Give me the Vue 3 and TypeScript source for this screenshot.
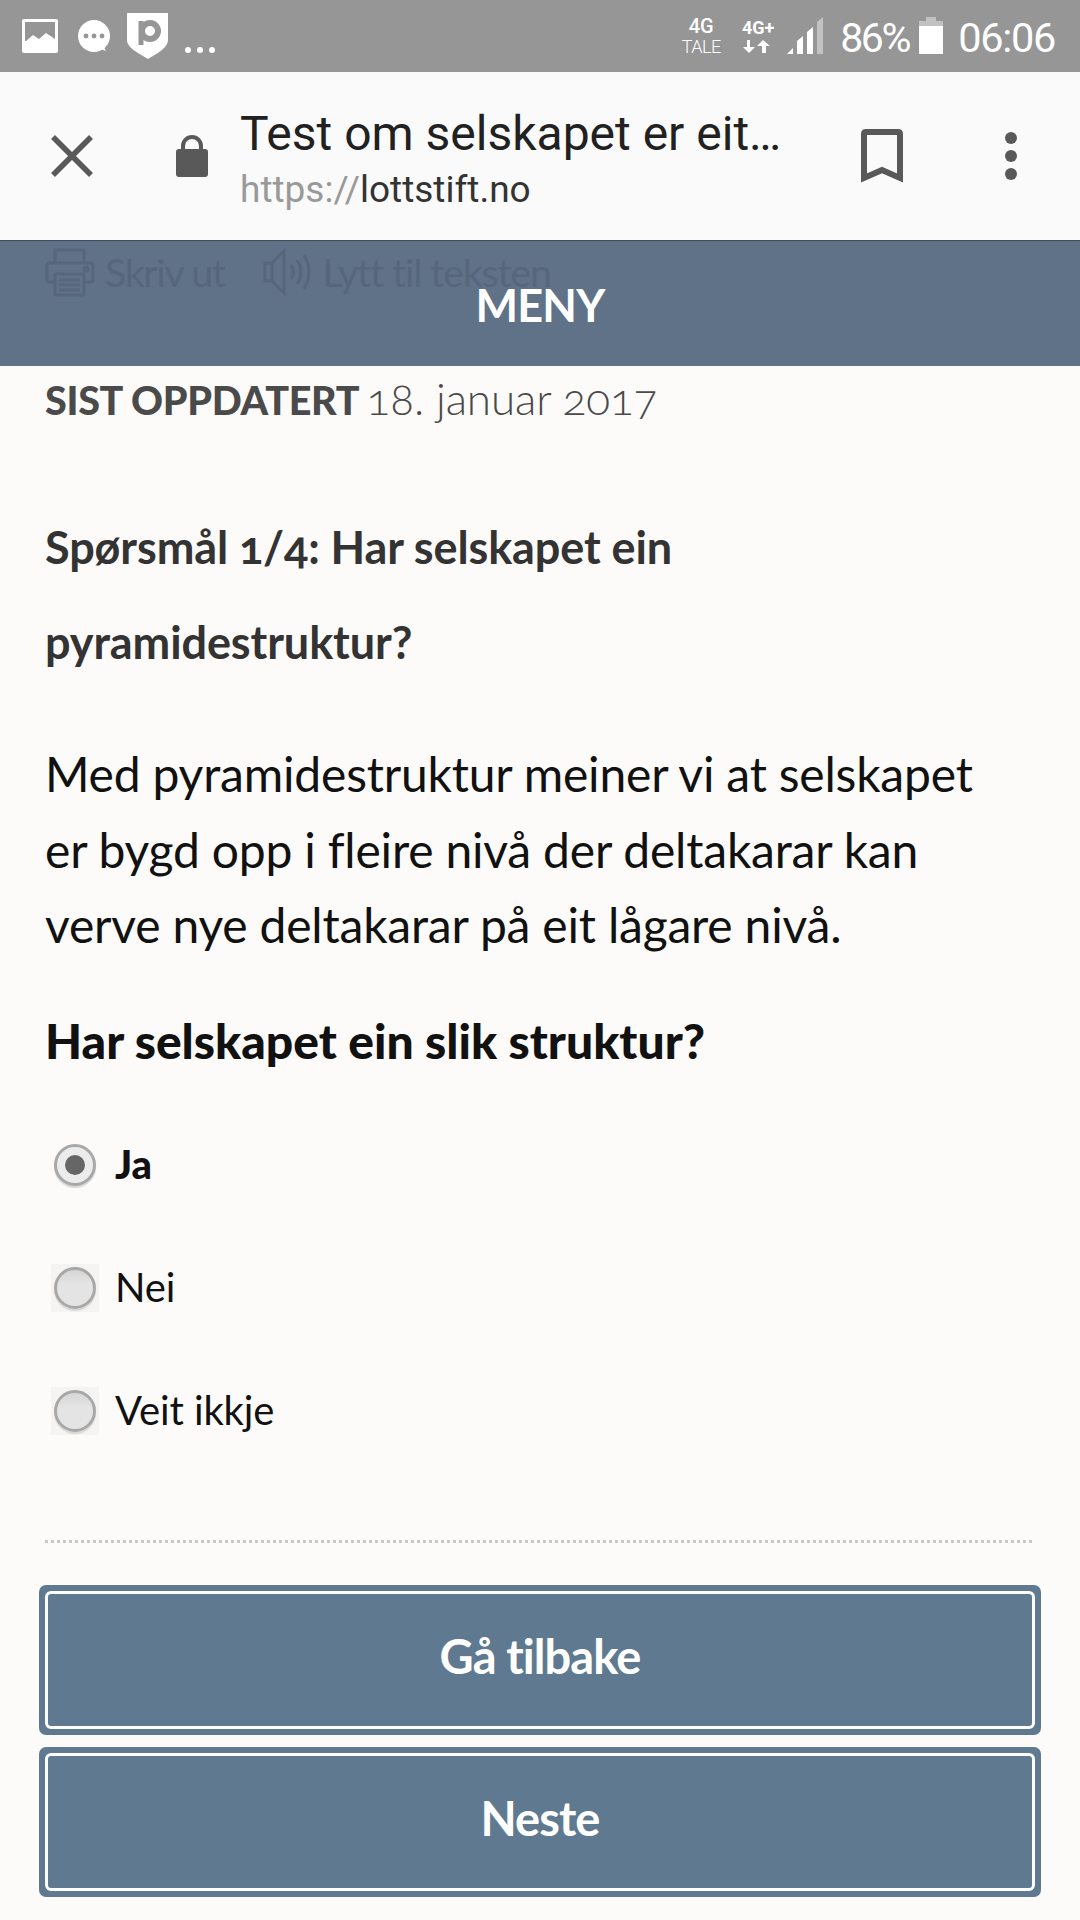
<script setup lang="ts">
interface Option { label: string; checked: boolean }
const options: Option[] = [
  { label: 'Ja', checked: true },
  { label: 'Nei', checked: false },
  { label: 'Veit ikkje', checked: false },
]
const buttons: string[] = ['Gå tilbake', 'Neste']
</script>

<template>
  <div class="screen">
    <div class="status">
      <svg class="notif" width="240" height="72" viewBox="0 0 240 72">
        <rect x="22" y="19" width="36" height="34" rx="2" fill="#fff" />
        <path d="M25 22H55V39L46 33L39 39L33 35L26 41L25 41Z" fill="#969696" />
        <circle cx="94" cy="36" r="16" fill="#fff" />
        <path d="M98 48L106 51L102 44Z" fill="#fff" />
        <circle cx="86" cy="36" r="2.4" fill="#969696" />
        <circle cx="94" cy="36" r="2.4" fill="#969696" />
        <circle cx="102" cy="36" r="2.4" fill="#969696" />
        <path d="M127 13H168V40C168 48 156 54 148 59C140 54 127 48 127 40Z" fill="#fff" />
        <circle cx="150" cy="31" r="8" fill="none" stroke="#969696" stroke-width="6" />
        <path d="M141 21V45" stroke="#969696" stroke-width="5" />
        <circle cx="188" cy="50" r="3" fill="#fff" />
        <circle cx="200" cy="50" r="3" fill="#fff" />
        <circle cx="212" cy="50" r="3" fill="#fff" />
      </svg>
      <div class="status-right">
        <div class="net net-a"><span class="net-top">4G</span><span class="net-bottom">TALE</span></div>
        <div class="net net-b">
          <span class="net-plus">4G+</span>
          <svg width="36" height="14" viewBox="0 0 36 14">
            <path d="M10 0V7H15L9 13L3 7H7V0Z" fill="#fff" />
            <path d="M22 13V6H17L23 0L30 6H26V13Z" fill="#fff" />
          </svg>
        </div>
        <svg class="signal" width="38" height="38" viewBox="0 0 38 38">
          <path d="M1 37L7 31V37Z" fill="#fff" />
          <path d="M11 37V24L17 19V37Z" fill="#fff" />
          <path d="M21 37V15L27 10V37Z" fill="#fff" />
          <path d="M31 37V5L37 0V37Z" fill="#c2c2c2" />
        </svg>
        <span class="pct">86%</span>
        <svg class="battery" width="24" height="37" viewBox="0 0 24 37">
          <path d="M7 0H17V4H24V9H0V4H7Z" fill="#c2c2c2" />
          <rect y="9" width="24" height="28" fill="#fff" />
        </svg>
        <span class="clock">06:06</span>
      </div>
    </div>

    <header class="toolbar">
      <svg class="close" width="42" height="42" viewBox="0 0 42 42">
        <path d="M2 2L40 40M40 2L2 40" stroke="#595959" stroke-width="5.5" />
      </svg>
      <svg class="lock" width="32" height="42" viewBox="0 0 32 42">
        <path d="M7 16V11A9 9 0 0 1 25 11V16" fill="none" stroke="#595959" stroke-width="4" />
        <rect y="14" width="32" height="28" rx="3" fill="#595959" />
      </svg>
      <div class="titles">
        <div class="title">Test om selskapet er eit…</div>
        <div class="url"><span class="scheme">https://</span>lottstift.no</div>
      </div>
      <svg class="bookmark" width="42" height="54" viewBox="0 0 42 54">
        <path d="M3 49V5Q3 3 5 3H37Q39 3 39 5V49L21 41Z" fill="none" stroke="#595959" stroke-width="6" />
      </svg>
      <svg class="more" width="12" height="48" viewBox="0 0 12 48">
        <circle cx="6" cy="6" r="6" fill="#595959" />
        <circle cx="6" cy="24" r="6" fill="#595959" />
        <circle cx="6" cy="42" r="6" fill="#595959" />
      </svg>
    </header>

    <nav class="menu">
      <div class="ghost">
        <svg width="50" height="50" viewBox="0 0 50 50" fill="none" stroke="#56677c" stroke-width="3">
          <path d="M10 16V3H39V16" />
          <path d="M10 35H4Q2 35 2 33V18Q2 16 4 16H45Q48 16 48 18V33Q48 35 45 35H39" />
          <rect x="10" y="27" width="29" height="21" rx="2" />
          <path d="M14 33H35M14 38H35M14 43H35" />
          <circle cx="41" cy="22" r="2" />
        </svg>
        <span class="ghost-text">Skriv ut</span>
        <svg class="ghost-speaker" width="52" height="50" viewBox="0 0 52 50" fill="none" stroke="#56677c" stroke-width="3">
          <path d="M2 16H9V34H2Z" />
          <path d="M9 16L21 4V46L9 34" />
          <path d="M28 18Q33 25 28 32" />
          <path d="M34 13Q42 25 34 37" />
          <path d="M41 8Q51 25 41 42" />
        </svg>
        <span class="ghost-text ghost-text-last">Lytt til teksten</span>
      </div>
      <span class="menu-label">MENY</span>
    </nav>

    <main class="content">
      <p class="meta"><strong>SIST OPPDATERT</strong> <span class="date">18. januar 2017</span></p>
      <h1 class="question">Spørsmål 1/4: Har selskapet ein pyramidestruktur?</h1>
      <p class="body">Med pyramidestruktur meiner vi at selskapet er bygd opp i fleire nivå der deltakarar kan verve nye deltakarar på eit lågare nivå.</p>
      <h2 class="sub">Har selskapet ein slik struktur?</h2>
      <div class="options">
        <label v-for="o in options" :key="o.label" class="option" :class="{ on: o.checked }">
          <span class="radio-box"><span class="radio"><span v-if="o.checked" class="dot"></span></span></span>
          <span class="option-label">{{ o.label }}</span>
        </label>
      </div>
      <hr class="rule" />
      <div class="actions">
        <button v-for="b in buttons" :key="b" class="btn" type="button"><span class="btn-inner">{{ b }}</span></button>
      </div>
    </main>
  </div>
</template>

<style>
html, body { margin: 0; background: #fcfbf9; }
</style>

<style scoped>
.screen { width: 1080px; height: 1920px; overflow: hidden; background: #fcfbf9; display: flex; flex-direction: column; font-family: Lato, "Open Sans", sans-serif; }
.status { height: 72px; flex: none; background: #969696; display: flex; justify-content: space-between; }
.notif { display: block; flex: none; }
.status-right { display: flex; align-items: flex-start; padding-right: 25px; color: #fff; font-family: Roboto, sans-serif; }
.net { display: flex; flex-direction: column; align-items: center; }
.net-a { margin-top: 16px; width: 40px; }
.net-top { font-size: 20px; line-height: 21px; font-weight: 500; }
.net-bottom { font-size: 18px; line-height: 20px; font-weight: 300; letter-spacing: -0.5px; }
.net-b { margin: 18px 0 0 18px; width: 38px; }
.net-plus { font-size: 18px; line-height: 20px; font-weight: 700; }
.net-b svg { display: block; margin-top: 2px; }
.signal { margin: 17px 0 0 9px; }
.pct { margin: 14px 0 0 16px; font-size: 41px; line-height: 48px; letter-spacing: -2.4px; font-weight: 400; }
.battery { margin: 17px 0 0 10px; }
.clock { margin: 14px 0 0 15px; font-size: 41.5px; line-height: 48px; letter-spacing: -1.3px; font-weight: 400; }

.toolbar { height: 168px; flex: none; box-sizing: border-box; background: #fafafa; display: flex; align-items: center; padding-left: 51px; position: relative; z-index: 1; }
.close { flex: none; }
.lock { margin-left: 83px; flex: none; }
.titles { margin: 4px 0 0 32px; width: 621px; font-family: Roboto, sans-serif; flex: none; }
.title { font-size: 48px; line-height: 60px; color: #212121; white-space: nowrap; }
.url { font-size: 37px; line-height: 44px; color: #333; margin-top: 4px; }
.scheme { color: #999; }
.bookmark { flex: none; }
.more { margin-left: 102px; flex: none; }

.menu { height: 126px; flex: none; background: #607288; position: relative; display: flex; justify-content: center; align-items: flex-start; box-shadow: inset 0 2px 1px -1px #3f4a58; }
.ghost { position: absolute; left: 45px; top: 7px; display: flex; align-items: center; color: #56677c; }
.ghost-text { font-size: 39.5px; line-height: 50px; margin-left: 10px; letter-spacing: -1.4px; font-weight: 400; }
.ghost-text-last { margin-left: 8px; letter-spacing: -1.2px; }
.ghost-speaker { margin-left: 38px; }
.menu-label { position: relative; color: #fff; font-size: 45px; line-height: 56px; margin-top: 37px; font-weight: 700; letter-spacing: -0.8px; }

.content { padding: 0 45px; display: flex; flex-direction: column; flex: 1; }
.meta { margin: 2px 0 0; font-size: 44px; line-height: 60px; color: #4a4a4a; white-space: nowrap; font-feature-settings: "onum" 1; }
.meta strong { font-size: 39.5px; font-weight: 900; letter-spacing: -0.3px; }
.date { font-weight: 300; letter-spacing: -0.1px; margin-left: -4px; }
.question { margin: 70px 0 0; font-size: 45px; line-height: 95px; color: #333; font-weight: 700; letter-spacing: -0.1px; width: 760px; font-feature-settings: "onum" 1; }
.body { margin: 46px 0 0; font-size: 48px; line-height: 75.5px; color: #111; font-weight: 400; letter-spacing: -0.2px; max-width: 960px; }
.sub { margin: 48px 0 0; font-size: 48px; line-height: 60px; color: #111; font-weight: 900; letter-spacing: 0; }
.options { margin-top: 33px; display: flex; flex-direction: column; }
.option { height: 123px; display: flex; align-items: center; color: #111; font-size: 40px; }
.on { font-weight: 900; }
.radio-box { width: 48px; height: 48px; margin-left: 6px; display: flex; align-items: center; justify-content: center; background: #f5f4f2; }
.on .radio-box { background: transparent; }
.radio { width: 42px; height: 42px; box-sizing: border-box; border-radius: 50%; border: 3px solid #a8a8a8; background: linear-gradient(#d6d6d6, #e4e4e4 40%); box-shadow: 0 2px 1px #d8d8d8; display: flex; align-items: center; justify-content: center; }
.on .radio { background: #ececec; }
.dot { width: 20px; height: 20px; border-radius: 50%; background: #666; }
.option-label { margin: -2px 0 0 16px; letter-spacing: -0.1px; }
.rule { margin: 67px 0 0; border: 0; height: 3px; background: repeating-linear-gradient(90deg, #c8c8c8 0 3px, transparent 3px 6px); }
.actions { margin: 42px -6px 0; display: flex; flex-direction: column; gap: 12px; }
.btn { height: 150px; padding: 6px; border: 0; border-radius: 7px; background: #5f7a90; display: flex; font-family: inherit; }
.btn-inner { flex: 1; box-sizing: border-box; border: 3px solid #fff; border-radius: 6px; padding-bottom: 8px; display: flex; align-items: center; justify-content: center; color: #fff; font-size: 47px; font-weight: 700; letter-spacing: -0.9px; }
</style>
